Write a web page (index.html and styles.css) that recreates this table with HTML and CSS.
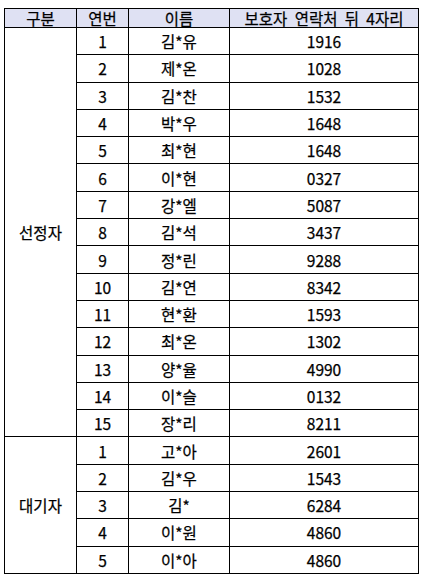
FILE: index.html
```html
<!DOCTYPE html>
<html lang="ko">
<head>
<meta charset="utf-8">
<link rel="stylesheet" href="styles.css">
</head>
<body>
<table class="roster">
  <colgroup>
    <col class="c-group"><col class="c-no"><col class="c-name"><col class="c-phone">
  </colgroup>
  <thead>
    <tr><th>구분</th><th>연번</th><th>이름</th><th>보호자 연락처 뒤 4자리</th></tr>
  </thead>
  <tbody>
    <tr><td rowspan="15">선정자</td><td>1</td><td>김*유</td><td>1916</td></tr>
    <tr><td>2</td><td>제*온</td><td>1028</td></tr>
    <tr><td>3</td><td>김*찬</td><td>1532</td></tr>
    <tr><td>4</td><td>박*우</td><td>1648</td></tr>
    <tr><td>5</td><td>최*현</td><td>1648</td></tr>
    <tr><td>6</td><td>이*현</td><td>0327</td></tr>
    <tr><td>7</td><td>강*엘</td><td>5087</td></tr>
    <tr><td>8</td><td>김*석</td><td>3437</td></tr>
    <tr><td>9</td><td>정*린</td><td>9288</td></tr>
    <tr><td>10</td><td>김*연</td><td>8342</td></tr>
    <tr><td>11</td><td>현*환</td><td>1593</td></tr>
    <tr><td>12</td><td>최*온</td><td>1302</td></tr>
    <tr><td>13</td><td>양*율</td><td>4990</td></tr>
    <tr><td>14</td><td>이*슬</td><td>0132</td></tr>
    <tr><td>15</td><td>장*리</td><td>8211</td></tr>
    <tr><td rowspan="5">대기자</td><td>1</td><td>고*아</td><td>2601</td></tr>
    <tr><td>2</td><td>김*우</td><td>1543</td></tr>
    <tr><td>3</td><td>김*</td><td>6284</td></tr>
    <tr><td>4</td><td>이*원</td><td>4860</td></tr>
    <tr><td>5</td><td>이*아</td><td>4860</td></tr>
  </tbody>
</table>
</body>
</html>
```
FILE: styles.css
```css
html, body {
  margin: 0;
  background: #fff;
}
body {
  padding: 8px 0 0 4px;
  font-family: "Noto Sans CJK KR", "Noto Sans", sans-serif;
  font-size: 15.5px;
  color: #000;
  -webkit-text-stroke: 0.25px #000;
}
.roster {
  border-collapse: collapse;
  table-layout: fixed;
  width: 414px;
  border: 1px solid #000;
}
.c-group { width: 72px; }
.c-no { width: 52px; }
.c-name { width: 101px; }
.c-phone { width: 189px; }
.roster th,
.roster td {
  border: 1px solid #000;
  padding: 0;
  text-align: center;
  vertical-align: middle;
  white-space: nowrap;
  line-height: 18px;
}
.roster th {
  height: 18px;
  font-weight: normal;
  background: #dfe1f3;
  word-spacing: 3px;
}
.roster tbody tr {
  height: 27.3px;
}
```
